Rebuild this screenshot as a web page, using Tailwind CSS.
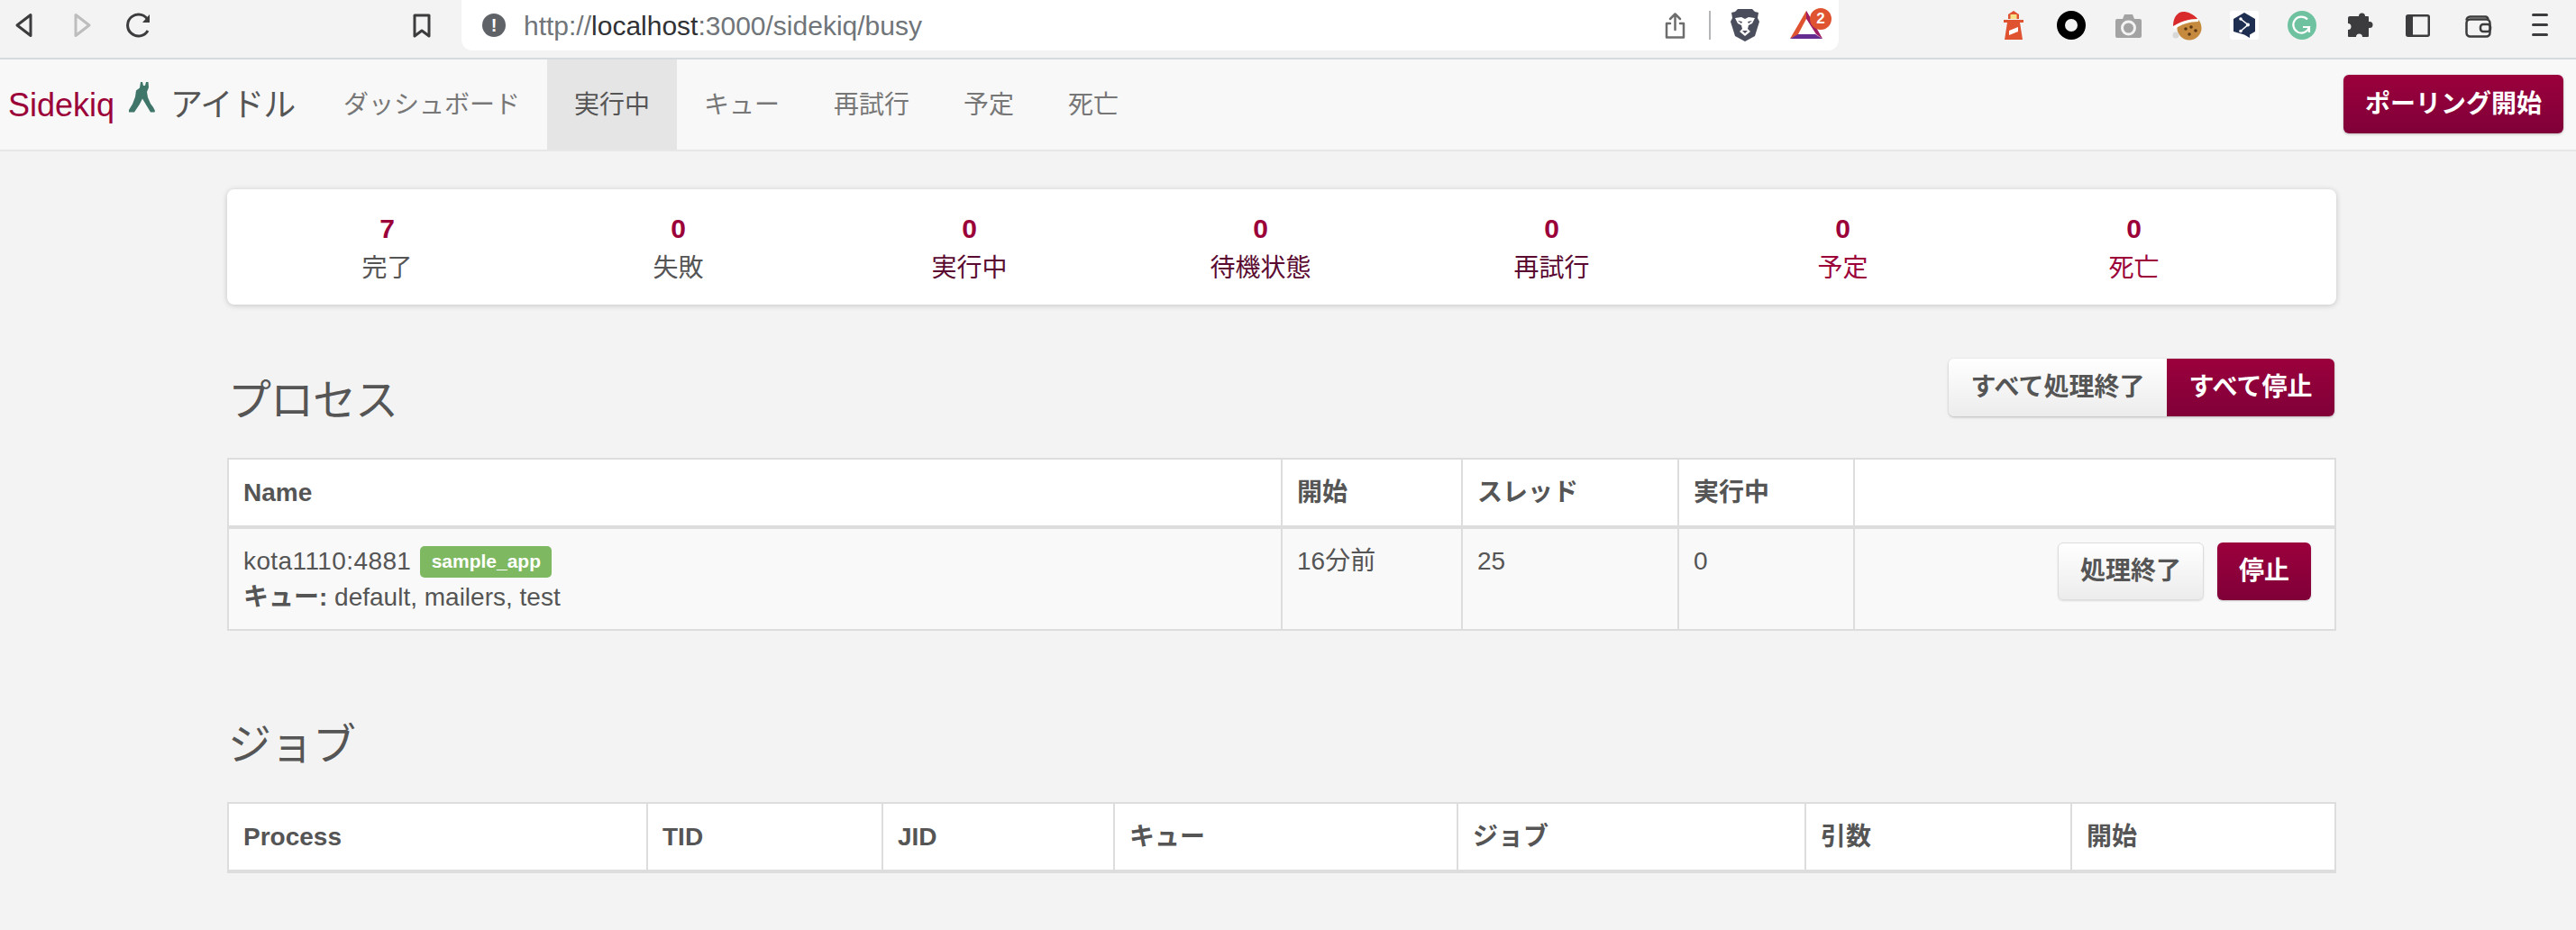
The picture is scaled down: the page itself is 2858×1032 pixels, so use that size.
<!doctype html>
<html lang="ja">
<head>
<meta charset="utf-8">
<script src="https://cdn.jsdelivr.net/npm/@tailwindcss/browser@4"></script>
<title>Sidekiq</title>
</head>
<body class="m-0 w-[2858px] h-[1032px] overflow-hidden bg-[#f3f3f3] text-[#555] font-['Liberation_Sans','Noto_Sans_CJK_JP',sans-serif]">

<!-- browser toolbar -->
<header class="relative h-[66px] bg-[#f3f3f3] border-b-2 border-[#d5dade]">
  <svg class="absolute left-[15px] top-[14px] w-[24px] h-[28px]" viewBox="0 0 24 28" fill="none" stroke="#3c3c3e" stroke-width="3" stroke-linejoin="round"><path d="M19 2.500 4 14l15 11.500z"/></svg>
  <svg class="absolute left-[79px] top-[14px] w-[24px] h-[28px]" viewBox="0 0 24 28" fill="none" stroke="#bdbdbd" stroke-width="3" stroke-linejoin="round"><path d="M5 2.500 20 14 5 25.500z"/></svg>
  <svg class="absolute left-[139px] top-[14px] w-[30px] h-[28px]" viewBox="0 0 30 28" fill="none" stroke="#3c3c3e" stroke-width="3"><path d="M25 20a12 12 0 1 1 .5-11"/><path d="M27 2v9h-8" fill="#3c3c3e" stroke="none"/></svg>
  <svg class="absolute left-[458px] top-[15px] w-[20px] h-[27px]" viewBox="0 0 20 27" fill="none" stroke="#3c3c3e" stroke-width="3" stroke-linejoin="round"><path d="M2 2h16v23l-8-6-8 6z"/></svg>

  <div class="absolute left-[512px] top-0 w-[1528px] h-[56px] bg-white rounded-b-[12px]"></div>
  <div class="absolute left-[535px] top-[15px] w-[26px] h-[26px] rounded-full bg-[#5f6368] text-white text-[20px] leading-[26px] font-bold text-center">!</div>
  <div class="absolute left-[581px] top-[12px] text-[30px] leading-[34px] text-[#70757a] whitespace-nowrap">http://<span class="text-[#303134]">localhost</span>:3000/sidekiq/busy</div>

  <svg class="absolute left-[1846px] top-[13px] w-[25px] h-[31px]" viewBox="0 0 25 31" fill="none" stroke="#6d6d6d" stroke-width="2.500" stroke-linejoin="round" stroke-linecap="round"><path d="M7 13H3v15.500h19V13h-4"/><path d="M12.500 20V2.500M7 8l5.500-5.500L18 8"/></svg>
  <div class="absolute left-[1896px] top-[12px] w-[2px] h-[32px] bg-[#b4b6b8]"></div>
  <svg class="absolute left-[1920px] top-[9px] w-[32px] h-[37px]" viewBox="0 0 32 37"><path d="M8 1h16l3 3 4 1-1 6 2 4-5 16-11 6-11-6L0 15l2-4-1-6 4-1z" fill="#4a4e5c"/><path d="M5 11l7-1 4 2 4-2 7 1-3 6-4 2-1 4 3 3-6 5-6-5 3-3-1-4-4-2z" fill="#fff"/><path d="M8 14l5 1-1 2zM24 14l-5 1 1 2zM13 25h6l-3 3z" fill="#4a4e5c"/></svg>
  <svg class="absolute left-[1986px] top-[8px] w-[48px] h-[36px]" viewBox="0 0 48 36"><path d="M0 35 18 4v18L9 31z" fill="#df5330"/><path d="M18 4l18 31-7-9-11-17z" fill="#9e1f63"/><path d="M0 35l9-5h19l8 5z" fill="#662d91"/><path d="M18 4v9l11 17 7 5z" fill="#9e1f63"/><path d="M18 13l-9 17h19z" fill="#fff"/><circle cx="34" cy="13" r="12" fill="#df5330"/></svg>
  <div class="absolute left-[2008px] top-[9px] w-[24px] text-center text-white font-bold text-[17px] leading-[24px]">2</div>

  <!-- extensions -->
  <svg class="absolute left-[2223px] top-[12px] w-[22px] h-[32px]" viewBox="0 0 22 32"><path d="M11 0l6 4v5h-12V4z" fill="#df5330"/><rect x="7.500" y="4" width="7" height="5" fill="#f7e28b"/><rect y="10" width="22" height="3" fill="#df5330"/><path d="M4 13h14l3 19H1z" fill="#df5330"/><path d="M6 22l10-4v5L6 27z" fill="#fff"/></svg>
  <div class="absolute left-[2282px] top-[12px] w-[32px] h-[32px] rounded-full border-[9px] border-black"></div>
  <svg class="absolute left-[2347px] top-[15px] w-[29px] h-[27px]" viewBox="0 0 29 27"><path d="M2 6h6l2-5h9l2 5h6a2 2 0 0 1 2 2v17a2 2 0 0 1-2 2H2a2 2 0 0 1-2-2V8a2 2 0 0 1 2-2z" fill="#a3a3a3"/><circle cx="14.500" cy="16" r="7" fill="none" stroke="#f3f3f3" stroke-width="3"/></svg>
  <svg class="absolute left-[2410px] top-[12px] w-[33px] h-[33px]" viewBox="0 0 33 33"><circle cx="19" cy="19" r="13.500" fill="#c58a3e"/><circle cx="15" cy="20" r="1.800" fill="#5b3716"/><circle cx="21" cy="18" r="1.800" fill="#5b3716"/><circle cx="26" cy="22" r="1.800" fill="#5b3716"/><circle cx="19" cy="26" r="1.800" fill="#5b3716"/><path d="M1 17C1 6 7 0 14 1c6 1 11 4 14 8-8 0-18 3-27 8z" fill="#d92b2b"/><path d="M1 18c7-6 17-9 28-9v3c-10 0-19 3-26 8z" fill="#fff"/><circle cx="4" cy="27" r="3.500" fill="#d8d8d8"/></svg>
  <div class="absolute left-[2474px] top-[12px] w-[32px] h-[32px] rounded-[3px] bg-white"></div>
  <svg class="absolute left-[2474px] top-[12px] w-[32px] h-[32px]" viewBox="0 0 32 32"><path d="M16 2l12 7v14l-6 3.500V30l-6-3.500-12-3.500V9z" fill="#1f2f52"/><path d="M12 9l8 6.500-8 7" fill="none" stroke="#fff" stroke-width="1.600"/><circle cx="12" cy="9" r="1.800" fill="#fff"/><circle cx="20" cy="15.500" r="2" fill="#fff"/><circle cx="12" cy="22.500" r="1.800" fill="#fff"/></svg>
  <svg class="absolute left-[2538px] top-[12px] w-[32px] h-[32px]" viewBox="0 0 32 32"><circle cx="16" cy="16" r="16" fill="#6fc2a0"/><path d="M22 9.500A9 9 0 1 0 24 18h-7m7 0v6" fill="none" stroke="#fff" stroke-width="2.200"/></svg>
  <svg class="absolute left-[2604px] top-[13px] w-[29px] h-[29px]" viewBox="0 0 29 29"><path d="M10 5h3a3.500 3.500 0 1 1 7 0h3a1 1 0 0 1 1 1v5h1a3.500 3.500 0 0 1 0 7h-1v9a1 1 0 0 1-1 1h-6a3.500 3.500 0 0 0-7 0H2a1 1 0 0 1-1-1v-7a3.500 3.500 0 0 0 0-7V7a2 2 0 0 1 2-2z" fill="#3c3c3e"/></svg>
  <svg class="absolute left-[2669px] top-[16px] w-[27px] h-[25px]" viewBox="0 0 27 25"><rect x="1.250" y="1.250" width="24.500" height="22.500" rx="1.500" fill="none" stroke="#3c3c3e" stroke-width="2.500"/><rect x="1" y="1" width="7" height="23" fill="#3c3c3e"/></svg>
  <svg class="absolute left-[2735px] top-[16px] w-[30px] h-[26px]" viewBox="0 0 30 26" fill="none" stroke="#3c3c3e" stroke-width="2.500"><path d="M1.500 6.500A4 4 0 0 1 5.500 2.500h17a3 3 0 0 1 3 3"/><rect x="1.500" y="5.500" width="26" height="19" rx="4"/><rect x="17" y="11" width="11" height="8" rx="3"/></svg>
  <svg class="absolute left-[2809px] top-[15px] w-[18px] h-[25px]" viewBox="0 0 18 25" fill="#3c3c3e"><rect width="18" height="3" rx="1.500"/><rect y="11" width="18" height="3" rx="1.500"/><rect y="22" width="18" height="3" rx="1.500"/></svg>
</header>

<!-- app navbar -->
<nav class="flex items-stretch h-[102px] bg-[#f8f8f8] border-b-2 border-[#e7e7e7]">
  <div class="flex items-center w-[351px] pl-[9px] pt-[2px] shrink-0">
    <span class="text-[36px] leading-[40px] text-[#9b0039]">Sidekiq</span>
    <svg class="ml-[16px] -mt-[14px] w-[30px] h-[38px]" viewBox="0 0 30 38"><path d="M13 0h2l1 4h2l1-4h2.500l.5 6-2 5 1 6 3 7 3 4 2 4-.5 1.500H24l-6-10-3-5-3 6-4 6-2 3H0v-2.500l4-6.500 3-8 1-7 4-3z" fill="#40766a"/></svg>
    <span class="ml-[16px] text-[36px] leading-[40px] text-[#555] tracking-[-1px] whitespace-nowrap">アイドル</span>
  </div>
  <a class="flex items-center px-[30px] pt-[2px] text-[28px] text-[#777] whitespace-nowrap">ダッシュボード</a>
  <a class="flex items-center px-[30px] pt-[2px] text-[28px] text-[#555] bg-[#e5e5e5] whitespace-nowrap">実行中</a>
  <a class="flex items-center px-[30px] pt-[2px] text-[28px] text-[#777] whitespace-nowrap">キュー</a>
  <a class="flex items-center px-[30px] pt-[2px] text-[28px] text-[#777] whitespace-nowrap">再試行</a>
  <a class="flex items-center px-[30px] pt-[2px] text-[28px] text-[#777] whitespace-nowrap">予定</a>
  <a class="flex items-center px-[30px] pt-[2px] text-[28px] text-[#777] whitespace-nowrap">死亡</a>
  <div class="ml-auto mr-[14px] mt-[17px]">
    <button class="w-[244px] h-[65px] rounded-[6px] bg-gradient-to-b from-[#9b003c] to-[#800038] text-white text-[28px] font-bold shadow-[0_1px_3px_rgba(0,0,0,0.25)] whitespace-nowrap">ポーリング開始</button>
  </div>
</nav>

<main class="ml-[252px] w-[2340px]">
  <!-- summary -->
  <section class="mt-[42px] h-[128px] pl-[16px] flex bg-white rounded-[8px] shadow-[0_1px_6px_rgba(0,0,0,0.2)]">
    <div class="w-[323px] pt-[25px] text-center"><div class="text-[30px] leading-[38px] font-bold text-[#9b0039]">7</div><div class="mt-[2px] text-[28px] leading-[46px] text-[#555]">完了</div></div>
    <div class="w-[323px] pt-[25px] text-center"><div class="text-[30px] leading-[38px] font-bold text-[#9b0039]">0</div><div class="mt-[2px] text-[28px] leading-[46px] text-[#555]">失敗</div></div>
    <div class="w-[323px] pt-[25px] text-center"><div class="text-[30px] leading-[38px] font-bold text-[#9b0039]">0</div><div class="mt-[2px] text-[28px] leading-[46px] text-[#5a0a30]">実行中</div></div>
    <div class="w-[323px] pt-[25px] text-center"><div class="text-[30px] leading-[38px] font-bold text-[#9b0039]">0</div><div class="mt-[2px] text-[28px] leading-[46px] text-[#5a0a30]">待機状態</div></div>
    <div class="w-[323px] pt-[25px] text-center"><div class="text-[30px] leading-[38px] font-bold text-[#9b0039]">0</div><div class="mt-[2px] text-[28px] leading-[46px] text-[#5a0a30]">再試行</div></div>
    <div class="w-[323px] pt-[25px] text-center"><div class="text-[30px] leading-[38px] font-bold text-[#9b0039]">0</div><div class="mt-[2px] text-[28px] leading-[46px] text-[#9b0039]">予定</div></div>
    <div class="w-[323px] pt-[25px] text-center"><div class="text-[30px] leading-[38px] font-bold text-[#9b0039]">0</div><div class="mt-[2px] text-[28px] leading-[46px] text-[#9b0039]">死亡</div></div>
  </section>

  <!-- processes -->
  <div class="mt-[60px] flex items-start justify-between h-[110px]">
    <h3 class="mt-[23px] ml-[1px] text-[48px] leading-[48px] font-normal text-[#555] tracking-[-1px]">プロセス</h3>
    <div class="flex mr-[2px] shadow-[0_1px_3px_rgba(0,0,0,0.25)] rounded-[6px]">
      <button class="w-[242px] h-[64px] rounded-l-[6px] bg-gradient-to-b from-white to-[#ececec] text-[#555] text-[28px] font-bold whitespace-nowrap">すべて処理終了</button>
      <button class="w-[186px] h-[64px] rounded-r-[6px] bg-gradient-to-b from-[#9b003c] to-[#800038] text-white text-[28px] font-bold whitespace-nowrap">すべて停止</button>
    </div>
  </div>
  <table class="w-full table-fixed border-collapse border-2 border-[#ddd] text-[28px] bg-white">
    <colgroup><col class="w-[1169px]"><col class="w-[200px]"><col class="w-[240px]"><col class="w-[195px]"><col></colgroup>
    <thead>
      <tr class="h-[76px] border-b-[4px] border-[#ddd]">
        <th class="px-[16px] text-left font-bold border-r-2 border-[#ddd]">Name</th>
        <th class="px-[16px] text-left font-bold border-r-2 border-[#ddd]">開始</th>
        <th class="px-[16px] text-left font-bold border-r-2 border-[#ddd]">スレッド</th>
        <th class="px-[16px] text-left font-bold border-r-2 border-[#ddd]">実行中</th>
        <th></th>
      </tr>
    </thead>
    <tbody>
      <tr class="h-[114px] bg-[#f9f9f9]">
        <td class="px-[16px] pt-[16px] align-top leading-[40px] border-r-2 border-[#ddd]">
          <div class="flex items-center h-[40px] tracking-[0.4px]">kota1110:4881<span class="ml-[10px] inline-flex items-center justify-center w-[146px] h-[35px] rounded-[5px] bg-[#7eb962] text-white text-[21px] font-bold tracking-normal">sample_app</span></div>
          <div class="h-[40px]"><b>キュー:</b> default, mailers, test</div>
        </td>
        <td class="px-[16px] pt-[16px] align-top leading-[40px] border-r-2 border-[#ddd]">16分前</td>
        <td class="px-[16px] pt-[16px] align-top leading-[40px] border-r-2 border-[#ddd]">25</td>
        <td class="px-[16px] pt-[16px] align-top leading-[40px] border-r-2 border-[#ddd]">0</td>
        <td class="pr-[26px] pt-[15px] align-top">
          <div class="flex justify-end gap-[15px]">
            <button class="w-[162px] h-[64px] rounded-[6px] border border-[#ddd] bg-gradient-to-b from-white to-[#ececec] text-[#555] font-bold shadow-[0_1px_2px_rgba(0,0,0,0.12)] whitespace-nowrap">処理終了</button>
            <button class="w-[104px] h-[64px] rounded-[6px] bg-gradient-to-b from-[#9b003c] to-[#800038] text-white font-bold shadow-[0_1px_2px_rgba(0,0,0,0.2)] whitespace-nowrap">停止</button>
          </div>
        </td>
      </tr>
    </tbody>
  </table>

  <!-- jobs -->
  <h3 class="mt-[103px] ml-[1px] h-[46px] text-[48px] leading-[48px] font-normal text-[#555] tracking-[-1px]">ジョブ</h3>
  <table class="mt-[41px] w-full table-fixed border-collapse border-2 border-[#ddd] text-[28px] bg-white">
    <colgroup><col class="w-[465px]"><col class="w-[261px]"><col class="w-[257px]"><col class="w-[381px]"><col class="w-[386px]"><col class="w-[295px]"><col></colgroup>
    <thead>
      <tr class="h-[76px] border-b-[4px] border-[#ddd]">
        <th class="px-[16px] text-left font-bold border-r-2 border-[#ddd]">Process</th>
        <th class="px-[16px] text-left font-bold border-r-2 border-[#ddd]">TID</th>
        <th class="px-[16px] text-left font-bold border-r-2 border-[#ddd]">JID</th>
        <th class="px-[16px] text-left font-bold border-r-2 border-[#ddd]">キュー</th>
        <th class="px-[16px] text-left font-bold border-r-2 border-[#ddd]">ジョブ</th>
        <th class="px-[16px] text-left font-bold border-r-2 border-[#ddd]">引数</th>
        <th class="px-[16px] text-left font-bold">開始</th>
      </tr>
    </thead>
  </table>
</main>
</body>
</html>
